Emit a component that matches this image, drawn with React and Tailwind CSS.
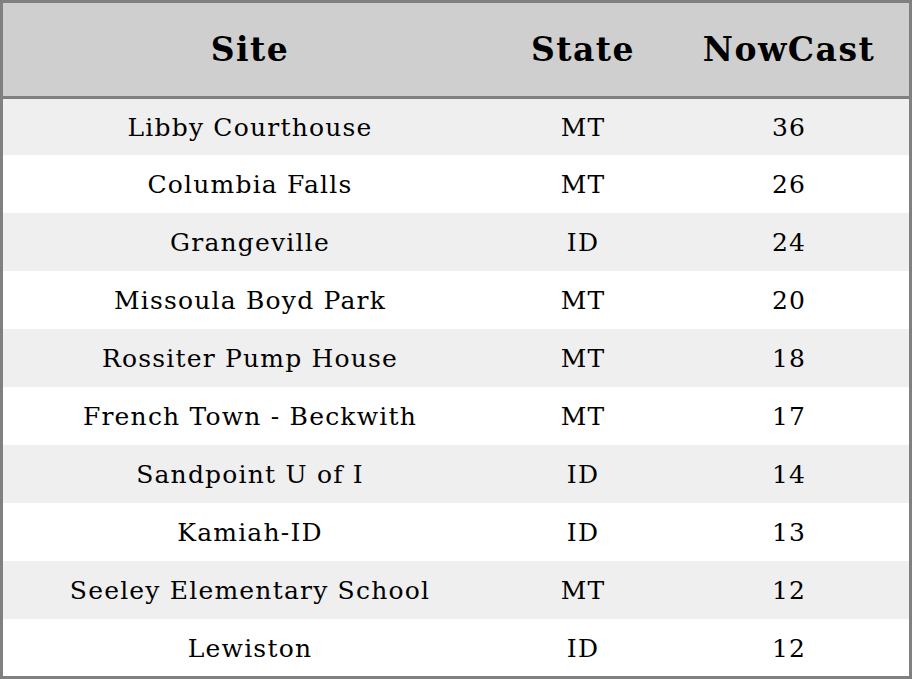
const rows = [
  ['Libby Courthouse', 'MT', 36],
  ['Columbia Falls', 'MT', 26],
  ['Grangeville', 'ID', 24],
  ['Missoula Boyd Park', 'MT', 20],
  ['Rossiter Pump House', 'MT', 18],
  ['French Town - Beckwith', 'MT', 17],
  ['Sandpoint U of I', 'ID', 14],
  ['Kamiah-ID', 'ID', 13],
  ['Seeley Elementary School', 'MT', 12],
  ['Lewiston', 'ID', 12],
];

export default function App() {
  return (
    <div
      className="w-[912px] h-[679px] flex flex-col border-[3px] border-[#808080] bg-white text-black"
      style={{ fontFamily: '"DejaVu Serif", serif' }}
    >
      <div className="h-[96px] shrink-0 flex items-center bg-[#cfcfcf] border-b-[3px] border-[#808080] text-[33px] font-bold tracking-[1.5px]">
        <div className="w-[494px] text-center">Site</div>
        <div className="w-[172px] text-center">State</div>
        <div className="flex-1 text-center">NowCast</div>
      </div>
      <div className="flex-1 flex flex-col">
        {rows.map(([site, state, val], i) => (
          <div
            key={site}
            className={`flex items-center text-[25px] tracking-[1.2px] pt-[2px] ${i === 0 ? 'h-[56px]' : i === rows.length - 1 ? 'flex-1' : 'h-[58px]'} ${i % 2 === 0 ? 'bg-[#efefef]' : 'bg-white'}`}
          >
            <div className="w-[494px] text-center">{site}</div>
            <div className="w-[172px] text-center">{state}</div>
            <div className="flex-1 text-center">{val}</div>
          </div>
        ))}
      </div>
    </div>
  );
}
